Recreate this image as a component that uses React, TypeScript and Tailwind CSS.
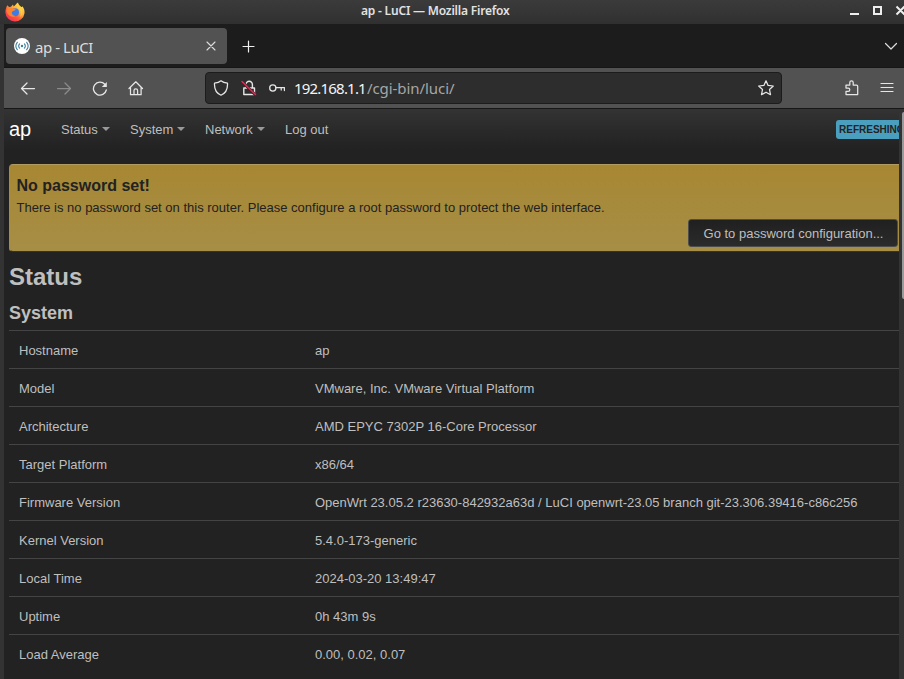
import React from "react";

const system: [string, string][] = [
  ["Hostname", "ap"],
  ["Model", "VMware, Inc. VMware Virtual Platform"],
  ["Architecture", "AMD EPYC 7302P 16-Core Processor"],
  ["Target Platform", "x86/64"],
  ["Firmware Version", "OpenWrt 23.05.2 r23630-842932a63d / LuCI openwrt-23.05 branch git-23.306.39416-c86c256"],
  ["Kernel Version", "5.4.0-173-generic"],
  ["Local Time", "2024-03-20 13:49:47"],
  ["Uptime", "0h 43m 9s"],
  ["Load Average", "0.00, 0.02, 0.07"],
];

function Icon({ children, className = "" }: { children: React.ReactNode; className?: string }) {
  return (
    <svg
      viewBox="0 0 16 16"
      className={"h-4 w-4 shrink-0 " + className}
      fill="none"
      stroke="currentColor"
      strokeWidth="1.25"
      strokeLinecap="round"
      strokeLinejoin="round"
    >
      {children}
    </svg>
  );
}

function FirefoxLogo() {
  return (
    <svg viewBox="0 0 20 20" className="h-5 w-5 shrink-0">
      <defs>
        <linearGradient id="flame" x1="0.85" y1="0.1" x2="0.2" y2="0.95">
          <stop offset="0" stopColor="#ffe14a" />
          <stop offset="0.35" stopColor="#ffb03a" />
          <stop offset="0.65" stopColor="#ff5a3c" />
          <stop offset="1" stopColor="#f0305a" />
        </linearGradient>
      </defs>
      <path d="M2.4 3.2 4 5l2-.3L8 2.6l.6 2C10 3.5 11 2 13 .5c.3 2 1.6 3 3 4.3.7.5 1 .2 1.3-.6 1.8 2 2.5 4.5 2.2 7A9.6 9.6 0 0 1 .4 10.500C.4 8 1.1 5 2.400 3.200Z" fill="url(#flame)" />
      <circle cx="10" cy="10.3" r="4" fill="#3b7de8" />
      <path d="M1.500 8.500C2.500 5.500 5 4.500 7.500 6.300c1.300.4 2.500.3 3.300.8-.4 1.300-1.800 1.700-3 2.200-.9.400-1.300 1.200-.9 2.200.5 1.500 2 2.500 3.700 2.400-3.500 2.500-8.600-1-9.100-5.400Z" fill="#ff8430" />
      <path d="M12.500 1c1 3 4.500 4 5 8 .3 2.500-.6 4.500-2.200 6 .7-2.400.8-5.300-.8-7.200C13 6 11 4.500 12.500 1Z" fill="#ffcf45" />
    </svg>
  );
}

function TitleBar() {
  return (
    <div className="flex h-6 w-full items-center bg-linear-to-b from-[#3b3b3b] to-[#303030]">
      <div className="w-[361px] pl-[5px]"><FirefoxLogo /></div>
      <div className="w-[150px] whitespace-nowrap pb-[2px] text-[12px] font-semibold leading-4 tracking-[-0.2px] text-[#e2e2e2]">ap - LuCI — Mozilla Firefox</div>
      <svg viewBox="0 0 54 24" className="ml-[339px] h-6 w-[54px] shrink-0" fill="none" stroke="#eee" strokeWidth="2">
        <path d="M0 14h9M24 7h7v7h-7zM46.500 6.500l8 8M54.500 6.500l-8 8" />
      </svg>
    </div>
  );
}

function TabStrip() {
  return (
    <div className="flex h-[43px] items-center bg-[#1c1c1c] pl-[2px] pr-[5px]">
      <div className="mt-px flex h-9 w-[221px] items-center rounded-[4px] bg-[#525252] pl-2 pr-[9px] text-[#ddd]">
        <svg viewBox="0 0 16 16" className="h-4 w-4 shrink-0" fill="none" stroke="#3f7d9c" strokeLinecap="round">
          <circle cx="8" cy="8" r="8" fill="#fff" stroke="none" />
          <circle cx="8" cy="8" r="1.200" fill="#3f7d9c" stroke="none" />
          <path d="M5.600 5.800a3.400 3.400 0 0 0 0 4.400M10.400 5.800a3.400 3.400 0 0 1 0 4.400M3.300 4.300a6 6 0 0 0 0 7.400M12.700 4.300a6 6 0 0 1 0 7.400" strokeWidth="1.100" />
        </svg>
        <span className="ml-[5px] grow whitespace-nowrap pt-[2px] text-[15px] leading-5 tracking-[-0.45px]">ap - LuCI</span>
        <Icon className="mr-[-1px]"><path d="M4 4l8 8M12 4l-8 8" strokeWidth="1.100" /></Icon>
      </div>
      <Icon className="ml-[14px] mt-[2px] text-[#eee]"><path d="M7.500 2v11M2 7.500h11" strokeWidth="1.200" /></Icon>
      <Icon className="ml-auto text-[#ddd]"><path d="M2.500 5.500 8 11l5.500-5.500" strokeWidth="1.200" /></Icon>
    </div>
  );
}

function Toolbar() {
  return (
    <div className="flex h-[42px] items-center border-y border-[#161616] bg-[#525252] text-[#e6e6e6]">
      <Icon className="ml-4"><path d="M14.500 8.500H1.500M7 3 1.500 8.500 7 14" /></Icon>
      <Icon className="ml-5 text-[#8b8b8b]"><path d="M1.500 8.500h13M9 3l5.500 5.500L9 14" /></Icon>
      <Icon className="ml-5">
        <path d="M14.300 10A6.500 6.500 0 1 1 12.800 4.300" strokeWidth="1.300" />
        <path d="M14.800 2v5H9.800Z" fill="currentColor" stroke="none" />
      </Icon>
      <Icon className="ml-5"><path d="M1 8.500 7.800 1.800 14.500 8.500M2.500 7.300v7.400h10.600V7.300M6 14.500v-4q0-1.700 1.800-1.700t1.800 1.700v4" /></Icon>
      <div className="ml-[61px] flex h-8 w-[577px] items-center rounded-[4px] border border-[#1c1c1c] bg-[#2d2d2d] px-[7px]">
        <Icon><path d="M8 .8C6 2.500 3.500 3 1.500 3.200 1.200 8.500 3 13 8 15.200c5-2.200 6.800-6.700 6.500-12C12.500 3 10 2.500 8 .8Z" /></Icon>
        <Icon className="ml-3">
          <path d="M2.800 8h10.700v6.500H2.800zM5 8V4.400a3.200 3.200 0 0 1 6.400 0V8" strokeWidth="1.400" />
          <path d="M1.500 2l13 13" stroke="#2d2d2d" strokeWidth="3" />
          <path d="M1 1.500l13.500 13" stroke="#ed2555" strokeWidth="1.500" />
        </Icon>
        <Icon className="ml-3"><circle cx="3.800" cy="8" r="3.100" /><path d="M7 7.500h8.400v3M12.200 7.500V10" /></Icon>
        <span className="ml-[9px] grow whitespace-nowrap text-[15px] leading-5 text-[#a6a6a6]"><span className="tracking-[-0.8px] text-[#f5f5f5]">192.168.1.1</span><span className="ml-px tracking-[-0.06px]">/cgi-bin/luci/</span></span>
        <Icon><path d="M8 .8l2.100 4.600 5.200.6-3.800 3.500 1 5.200L8 12.200l-4.500 2.500 1-5.200L.7 6l5.200-.6Z" /></Icon>
      </div>
      <Icon className="ml-[62px]"><path d="M2 5h3.800V2.600a1.700 1.700 0 0 1 3.400 0V5h3.300a1.200 1.200 0 0 1 1.200 1.200v8.300H2v-3.200h2.200a1.600 1.600 0 0 0 0-3.200H2Z" /></Icon>
      <Icon className="ml-[19px]"><path d="M2 3.500h12M2 7.500h12M2 11.500h12" strokeWidth="1.200" /></Icon>
    </div>
  );
}

function MenuItem({ label, width, caret = true }: { label: string; width: string; caret?: boolean }) {
  return (
    <div className={"flex shrink-0 items-center whitespace-nowrap pt-[2px] text-[13px] leading-5 text-[#bfbfbf] " + width}>
      {label}
      {caret && <span className="ml-[4px] mt-[-2px] border-x-4 border-t-4 border-x-transparent border-t-[#999]" />}
    </div>
  );
}

function Page() {
  return (
    <div className="min-w-0 grow overflow-hidden bg-[#222] font-['Liberation_Sans',Arial,sans-serif]">
      <header className="flex h-10 items-center bg-linear-to-b from-[#333] to-[#222] pl-[5px]">
        <div className="w-[52px] text-[20px] leading-6 text-white">ap</div>
        <MenuItem label="Status" width="w-[69px]" />
        <MenuItem label="System" width="w-[75px]" />
        <MenuItem label="Network" width="w-[80px]" />
        <MenuItem label="Log out" width="w-[60px]" caret={false} />
        <div className="ml-auto h-[19px] w-[63px] shrink-0 overflow-hidden whitespace-nowrap rounded-l-[3px] bg-[#4a9fbf] pl-[3px] text-[10px] font-bold leading-[20px] text-[#222]">REFRESHING</div>
      </header>
      <section className="ml-[5px] mt-[15px] h-[88px] rounded-l-[4px] border-y border-l border-t-[#b29b61] border-b-[#333] border-l-[#a68c46] bg-linear-to-b from-[#a78732] to-[#a68e46] pl-[6.500px] pt-[10px] text-[#222]">
        <h4 className="text-[16px] font-bold leading-[22px]">No password set!</h4>
        <p className="whitespace-nowrap text-[13px] leading-[22px]">There is no password set on this router. Please configure a root password to protect the web interface.</p>
        <div className="ml-auto mr-px flex h-7 w-[210px] items-center justify-center whitespace-nowrap rounded-[3px] border border-[#4c4c4c] bg-linear-to-b from-[#202020] to-[#2b2b2b] pl-px pt-[2px] text-[13px] text-[#bfbfbf]">Go to password configuration...</div>
      </section>
      <h2 className="ml-[5px] mt-[7px] text-[24px] font-bold leading-9 text-[#bfbfbf]">Status</h2>
      <h3 className="ml-[5px] text-[18px] font-bold leading-9 text-[#bfbfbf]">System</h3>
      <div className="ml-[5px] mt-[-1px]">
        {system.map(([name, value]) => (
          <div key={name} className="flex h-[38px] items-center whitespace-nowrap border-t border-[#444] pl-[10px] pt-[2px] text-[13px] leading-[18px] text-[#bfbfbf]">
            <div className="w-[296px] shrink-0">{name}</div>
            <div>{value}</div>
          </div>
        ))}
      </div>
    </div>
  );
}

export default function App() {
  return (
    <div className="h-[679px] w-[904px] overflow-hidden bg-[#333] font-['Noto_Sans',sans-serif]">
      <TitleBar />
      <div className="flex flex-col pl-1">
        <TabStrip />
        <Toolbar />
        <div className="flex h-[570px]">
          <Page />
          <div className="flex w-[5px] shrink-0 justify-end bg-[#333] pt-[3px]">
            <div className="h-[187px] w-[2px] rounded-l-sm bg-[#9a9a9a]" />
          </div>
        </div>
      </div>
    </div>
  );
}
